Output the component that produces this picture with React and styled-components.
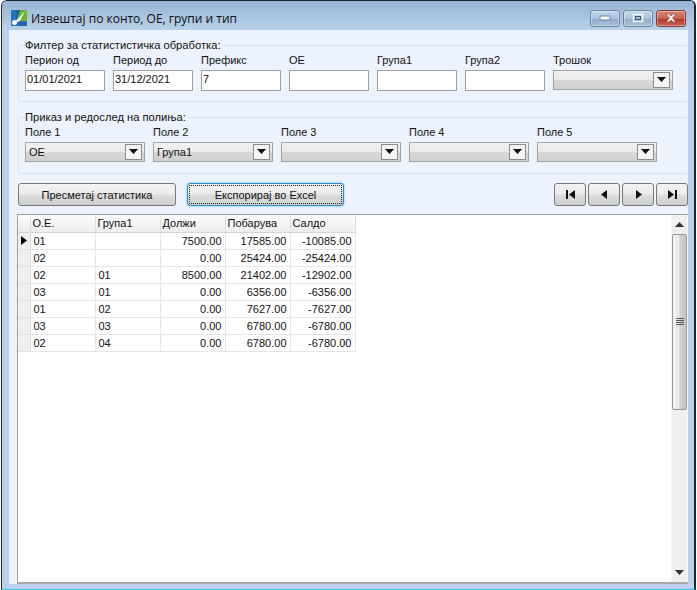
import React from "react";
import styled, { createGlobalStyle } from "styled-components";

const Global = createGlobalStyle`
  html, body { margin: 0; padding: 0; background: #fff; }
  #root { width: 697px; height: 590px; overflow: hidden; }
  * { box-sizing: border-box; }
`;

const Frame = styled.div`
  width: 695px;
  height: 590px;
  margin-left: 1px;
  display: flex;
  flex-direction: column;
  background: #b9d1ea;
  border: 1px solid #1c2a33;
  border-right: 2px solid #1c2a33;
  border-bottom: 1px solid #2fc4e0;
  border-radius: 6px 6px 0 0;
  font: 11px "Liberation Sans", Arial, sans-serif;
  color: #111;
  overflow: hidden;
`;

const TitleBar = styled.div`
  height: 29px;
  flex: none;
  display: flex;
  align-items: center;
  padding: 5px 8px 0 9px;
  background: linear-gradient(#99b5d2, #b9d1ea);
`;

const TitleText = styled.div`
  margin-left: 4px;
  font: 12px "Open Sans", "Noto Sans", sans-serif;
  color: #0c0c0c;
  flex: 1;
`;

const CaptionGroup = styled.div`
  display: flex;
  gap: 3px;
`;

const CaptionButton = styled.div`
  width: 30px;
  height: 17px;
  display: flex;
  align-items: center;
  justify-content: center;
  border: 1px solid ${(p) => (p.$close ? "#7c3a3a" : "#6b87a6")};
  border-radius: 3px;
  background: ${(p) =>
    p.$close
      ? "linear-gradient(#d9877a 0%, #c9604f 50%, #b03a2b 55%, #c9624f 100%)"
      : "linear-gradient(#c4d6e9 0%, #aac2dc 50%, #8fabc9 55%, #a9c2dc 100%)"};
  box-shadow: inset 0 0 0 1px rgba(255, 255, 255, 0.35);
`;

const Client = styled.div`
  flex: 1;
  margin: 0 6px 5px 7px;
  min-height: 0;
  display: flex;
  flex-direction: column;
  background: #ecf3fe;
  padding: 9px 0 0 8px;
  overflow: hidden;
`;

const Group = styled.fieldset`
  margin: 0 -10px ${(p) => p.$after} 1px;
  padding: 0 0 0 6px;
  height: ${(p) => p.$height};
  border: 1px solid #dde3ea;
  border-radius: 3px;
  flex: none;
  min-width: 0;
`;

const GroupTitle = styled.legend`
  padding: 0 1px 0 0;
  margin-left: 0;
  line-height: 13px;
  font-size: 11.2px;
`;

const FieldRow = styled.div`
  display: flex;
  gap: 8px;
  margin-top: 2px;
`;

const Field = styled.div`
  width: ${(p) => p.$width};
  flex: none;
  display: flex;
  flex-direction: column;
`;

const FieldLabel = styled.label`
  height: 16px;
  line-height: 12px;
  white-space: nowrap;
`;

const TextBox = styled.div`
  height: 21px;
  background: #fff;
  border: 1px solid #a0a0a0;
  padding: 1px 0 0 1px;
  line-height: 14px;
  outline: none;
`;

const Combo = styled.div`
  height: 20px;
  width: 100%;
  padding: 1px 2px 2px 3px;
  display: flex;
  align-items: center;
  justify-content: space-between;
  border: 1px solid #a3a3a3;
  background: linear-gradient(#f0f0f0 0%, #ececec 45%, #d6d6d6 55%, #cfcfcf 100%);
`;

const ComboValue = styled.span`
  line-height: 14px;
`;

const ComboArrow = styled.span`
  width: 17px;
  height: 16px;
  display: flex;
  align-items: center;
  justify-content: center;
  background: #f4f4f4;
  border: 1px solid #8b8b8b;
`;

const Toolbar = styled.div`
  display: flex;
  align-items: stretch;
  height: 23px;
  margin-bottom: 8px;
  padding-left: 1px;
  flex: none;
`;

const PushButton = styled.button`
  width: ${(p) => p.$width};
  margin-right: ${(p) => p.$gap || 0};
  height: 23px;
  padding: 0;
  font: 11px "Liberation Sans", Arial, sans-serif;
  color: #111;
  border: 1px solid ${(p) => (p.$focus ? "#2e8bc0" : "#777")};
  border-radius: 3px;
  background: linear-gradient(#f3f3f3 0%, #ebebeb 48%, #dcdcdc 52%, #cfcfcf 100%);
  box-shadow: ${(p) => (p.$focus ? "0 0 2px #42b4e6" : "none")};
  outline: ${(p) => (p.$focus ? "1px dotted #222" : "none")};
  outline-offset: -3px;
`;

const NavGroup = styled.div`
  margin-left: auto;
  display: flex;
  gap: 2px;
`;

const NavButton = styled.button`
  width: 32px;
  height: 23px;
  padding: 0;
  display: flex;
  align-items: center;
  justify-content: center;
  border: 1px solid #777;
  border-radius: 3px;
  background: linear-gradient(#f3f3f3 0%, #ebebeb 48%, #dcdcdc 52%, #cfcfcf 100%);
`;

const GridBox = styled.div`
  flex: 1;
  min-height: 0;
  display: flex;
  background: #fff;
  border: 1px solid #a0a0a0;
  border-right: none;
  border-bottom: 2px solid #a9a9a9;
`;

const GridBody = styled.div`
  flex: 1;
  min-width: 0;
`;

const Table = styled.table`
  border-collapse: collapse;
  table-layout: fixed;
  width: 337px;
  font: 11px "Liberation Sans", Arial, sans-serif;
`;

const HeadCell = styled.th`
  height: 17px;
  width: ${(p) => (p.$corner ? "12px" : "65px")};
  padding: 0 0 0 2px;
  text-align: left;
  font-weight: normal;
  border-right: 1px solid #dfdfdf;
  border-bottom: 1px solid #d5d5d5;
  background: linear-gradient(#fbfbfb, #ededed);
`;

const RowHead = styled.td`
  height: 17px;
  padding: 0;
  border-right: 1px solid #d8d8d8;
  border-bottom: 1px solid #e2e2e2;
  background: #efefef;
  vertical-align: middle;
`;

const Cell = styled.td`
  height: 17px;
  padding: ${(p) => (p.$num ? "0 3px 0 0" : "0 0 0 3px")};
  text-align: ${(p) => (p.$num ? "right" : "left")};
  border-right: 1px solid #e6e6e6;
  border-bottom: 1px solid #e6e6e6;
  overflow: hidden;
`;

const ScrollBar = styled.div`
  width: 17px;
  flex: none;
  display: flex;
  flex-direction: column;
  background: #efefef;
  border-left: 1px solid #f7f7f7;
  border-right: 1px solid #f7f7f7;
`;

const ScrollArrow = styled.div`
  height: 19px;
  flex: none;
  display: flex;
  align-items: center;
  justify-content: center;
`;

const ScrollThumb = styled.div`
  height: 176px;
  flex: none;
  display: flex;
  align-items: center;
  justify-content: center;
  border: 1px solid #979797;
  border-radius: 2px;
  background: linear-gradient(90deg, #f2f2f2 0%, #e9e9e9 45%, #d2d2d2 55%, #c6c6c6 100%);
`;

const ScrollTrack = styled.div`
  flex: 1;
`;

const Caret = () => (
  <svg width="9" height="5" viewBox="0 0 9 5"><path d="M0 0h9L4.5 5z" fill="#111" /></svg>
);

const ComboField = ({ value }) => (
  <Combo>
    <ComboValue>{value}</ComboValue>
    <ComboArrow><Caret /></ComboArrow>
  </Combo>
);

const Logo = () => (
  <svg width="16" height="16" viewBox="0 0 16 16">
    <rect width="16" height="16" rx="1" fill="#2472b8" />
    <path d="M6 0h4L5 8z" fill="#1a5a9c" />
    <path d="M9 0h7v11H9L6 11z" fill="#6cb22e" />
    <path d="M2 14L14 1 9 11z" fill="#f2f8ea" />
    <path d="M6 12h10v4H6z" fill="#2566ad" />
    <circle cx="3.5" cy="12.5" r="2.5" fill="#f2f8ff" />
  </svg>
);

const Nav = ({ d }) => (
  <NavButton>
    <svg width="11" height="9" viewBox="0 0 11 9"><path d={d} fill="#111" /></svg>
  </NavButton>
);

const rows = [
  ["01", "", "7500.00", "17585.00", "-10085.00"],
  ["02", "", "0.00", "25424.00", "-25424.00"],
  ["02", "01", "8500.00", "21402.00", "-12902.00"],
  ["03", "01", "0.00", "6356.00", "-6356.00"],
  ["01", "02", "0.00", "7627.00", "-7627.00"],
  ["03", "03", "0.00", "6780.00", "-6780.00"],
  ["02", "04", "0.00", "6780.00", "-6780.00"],
];

export default function App() {
  return (
    <>
      <Global />
      <Frame>
        <TitleBar>
          <Logo />
          <TitleText>Извештај по конто, ОЕ, групи и тип</TitleText>
          <CaptionGroup>
            <CaptionButton>
              <svg width="12" height="6" viewBox="0 0 12 6"><rect x="1" y="1" width="10" height="4" rx="1" fill="#f2f6fa" stroke="#5d7590" strokeWidth=".8" /></svg>
            </CaptionButton>
            <CaptionButton>
              <svg width="12" height="10" viewBox="0 0 12 10"><rect x="1.5" y="1.5" width="9" height="7" fill="none" stroke="#f2f6fa" strokeWidth="1.5" /><rect x="3.5" y="3.5" width="5" height="3" fill="none" stroke="#3f5872" /></svg>
            </CaptionButton>
            <CaptionButton $close>
              <svg width="14" height="10" viewBox="0 0 14 10"><path d="M2 1h3l2 2 2-2h3L8.5 5 12 9H9L7 7 5 9H2l3.5-4z" fill="#f3f0ee" stroke="#7b4a44" strokeWidth=".6" /></svg>
            </CaptionButton>
          </CaptionGroup>
        </TitleBar>
        <Client>
          <Group $height="63px" $after="9px">
            <GroupTitle>Филтер за статистистичка обработка:</GroupTitle>
            <FieldRow>
              <Field $width="80px"><FieldLabel>Перион од</FieldLabel><TextBox>01/01/2021</TextBox></Field>
              <Field $width="80px"><FieldLabel>Период до</FieldLabel><TextBox>31/12/2021</TextBox></Field>
              <Field $width="80px"><FieldLabel>Префикс</FieldLabel><TextBox>7</TextBox></Field>
              <Field $width="80px"><FieldLabel>ОЕ</FieldLabel><TextBox /></Field>
              <Field $width="80px"><FieldLabel>Група1</FieldLabel><TextBox /></Field>
              <Field $width="80px"><FieldLabel>Група2</FieldLabel><TextBox /></Field>
              <Field $width="120px"><FieldLabel>Трошок</FieldLabel><ComboField /></Field>
            </FieldRow>
          </Group>
          <Group $height="63px" $after="9px">
            <GroupTitle>Приказ и редослед на полиња:</GroupTitle>
            <FieldRow>
              <Field $width="120px"><FieldLabel>Поле 1</FieldLabel><ComboField value="ОЕ" /></Field>
              <Field $width="120px"><FieldLabel>Поле 2</FieldLabel><ComboField value="Група1" /></Field>
              <Field $width="120px"><FieldLabel>Поле 3</FieldLabel><ComboField /></Field>
              <Field $width="120px"><FieldLabel>Поле 4</FieldLabel><ComboField /></Field>
              <Field $width="120px"><FieldLabel>Поле 5</FieldLabel><ComboField /></Field>
            </FieldRow>
          </Group>
          <Toolbar>
            <PushButton $width="158px" $gap="11px">Пресметај статистика</PushButton>
            <PushButton $width="157px" $focus>Експорирај во Excel</PushButton>
            <NavGroup>
              <Nav d="M1 0h2v9H1zM10 0v9L4 4.5z" />
              <Nav d="M8 0v9L2 4.5z" />
              <Nav d="M3 0v9l6-4.5z" />
              <Nav d="M1 0v9l6-4.5zM8 0h2v9H8z" />
            </NavGroup>
          </Toolbar>
          <GridBox>
            <GridBody>
              <Table>
                <thead>
                  <tr>
                    <HeadCell $corner />
                    <HeadCell>О.Е.</HeadCell>
                    <HeadCell>Група1</HeadCell>
                    <HeadCell>Должи</HeadCell>
                    <HeadCell>Побарува</HeadCell>
                    <HeadCell>Салдо</HeadCell>
                  </tr>
                </thead>
                <tbody>
                  {rows.map((r, i) => (
                    <tr key={i}>
                      <RowHead>
                        {i === 0 && (
                          <svg width="11" height="11" viewBox="0 0 11 11" style={{ display: "block" }}>
                            <path d="M3 1l6 4.5L3 10z" fill="#000" />
                          </svg>
                        )}
                      </RowHead>
                      <Cell>{r[0]}</Cell>
                      <Cell>{r[1]}</Cell>
                      <Cell $num>{r[2]}</Cell>
                      <Cell $num>{r[3]}</Cell>
                      <Cell $num>{r[4]}</Cell>
                    </tr>
                  ))}
                </tbody>
              </Table>
            </GridBody>
            <ScrollBar>
              <ScrollArrow>
                <svg width="9" height="5" viewBox="0 0 9 5"><path d="M4.5 0L9 5H0z" fill="#333" /></svg>
              </ScrollArrow>
              <ScrollThumb>
                <svg width="8" height="9" viewBox="0 0 8 9"><path d="M0 .5h8M0 2.5h8M0 4.5h8M0 6.5h8" stroke="#555" /></svg>
              </ScrollThumb>
              <ScrollTrack />
              <ScrollArrow>
                <svg width="9" height="5" viewBox="0 0 9 5"><path d="M0 0h9L4.5 5z" fill="#333" /></svg>
              </ScrollArrow>
            </ScrollBar>
          </GridBox>
        </Client>
      </Frame>
    </>
  );
}
